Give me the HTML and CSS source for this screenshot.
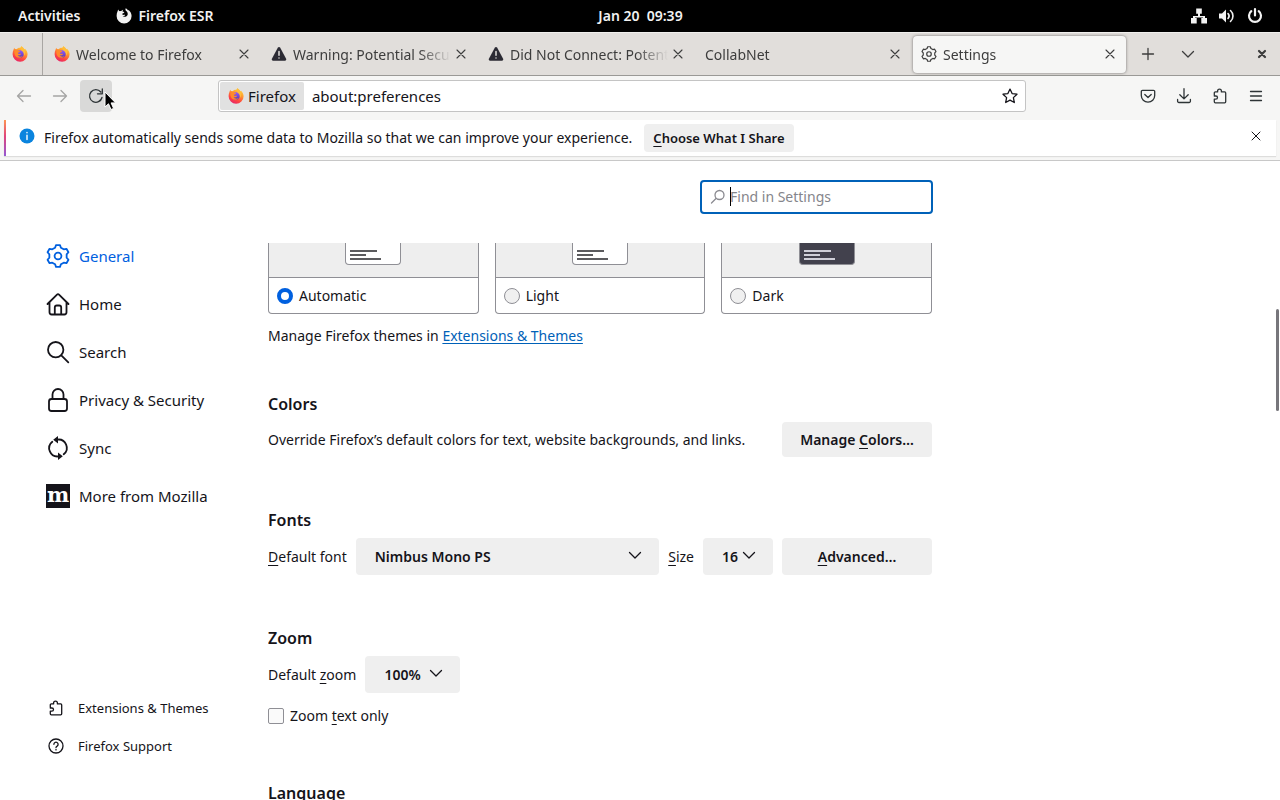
FILE: index.html
```html
<!DOCTYPE html>
<html lang="en">
<head>
    <meta charset="UTF-8">
    <meta name="viewport" content="width=device-width, initial-scale=1.0">
    <title>Settings</title>
    <link rel="stylesheet" href="styles.css">
</head>
<body>
    <svg class="sprite" aria-hidden="true">
        <defs>
            <linearGradient id="flame" x1="0.8" y1="0" x2="0.3" y2="1">
                <stop offset="0" stop-color="#ffe14a"/>
                <stop offset="0.35" stop-color="#ffa02e"/>
                <stop offset="0.7" stop-color="#ff4a3f"/>
                <stop offset="1" stop-color="#e6236a"/>
            </linearGradient>
            <linearGradient id="globe" x1="0" y1="0" x2="0" y2="1">
                <stop offset="0" stop-color="#9059ff"/>
                <stop offset="1" stop-color="#5b3bb0"/>
            </linearGradient>
        </defs>
        <symbol id="i-firefox" viewBox="0 0 16 16">
            <path fill="url(#flame)" d="M1.6 3.4c.1-.7.5-1.3.9-1.6 0 .6.2 1 .5 1.4.6-.2 1.200-.2 1.800 0C5.600 2.300 6.800 1.700 8 1.900 8.500 1.400 9 .8 9.200.2c1.800 1 2.600 1.900 3.200 3 .4-.1.600-.2.700-.4 1.500 1.400 2.500 3.400 2.500 5.500a7.500 7.500 0 0 1-15 0c0-1.800.3-3.400 1-4.900z"/>
            <circle cx="8" cy="8" r="3.700" fill="url(#globe)"/>
            <path fill="#ff8a2b" d="M2.600 4.500c1.200-.7 2.700-.5 3.700.3.600-.1 1.300.1 1.700.4-.1.800-.8 1.100-1.600 1.400-.6.300-.5.900.1 1.200.8.300 1.700-.4 2.600 0-.5 1.500-2.200 1.800-3.400 1.300.7 1.500 3.200 2.200 5 .9-1.100 2.100-4.600 2.500-6.600.7C2.600 9.400 2 6.900 2.600 4.500z"/>
            <path fill="#ffbd3a" d="M9.200.2c1.900 1.100 3.500 3 3.900 5.200.3 1.800-.2 3.300-1 4.300.1-2-.4-3.300-1.500-4.200C9 4.300 8.200 2.300 9.200.2z"/>
        </symbol>
        <symbol id="i-firefox-mono" viewBox="0 0 16 16">
            <path d="M1.500 3.600c.2-1 .6-1.600 1.100-2 0 .8.200 1.200.6 1.600.7-.2 1.200-.2 1.800 0 .5-.8 1.400-1.300 2.200-1.400-.5.600-.8 1.200-.7 1.800l1.800.5c0 .7-.9 1.200-1.700 1.500-.4.300-.4.900.1 1.200.8.400 1.500-.3 2.400.1-.4 1-1.400 1.300-2.500 1.200 1.300 1.400 4.600.9 5.100-1.700.3-2-.9-3.300-2-4-.4-.6-.3-1.400.1-2.200 1 .5 1.900 1.400 2.300 2.400l.5-.7c1.700 1.300 3 3.600 3 6a7.500 7.500 0 0 1-15 0c0-1.500.3-3 .9-4.300z"/>
        </symbol>
        <symbol id="i-gear" viewBox="-12 -12 24 24">
            <path d="M-2-10.900H2L2.900-8.300 5.740-6.660 8.440-7.180 10.440-3.720 8.640-1.640V1.640L10.440 3.720 8.440 7.180 5.740 6.660 2.900 8.300 2 10.900H-2L-2.900 8.300-5.740 6.660-8.440 7.180-10.440 3.720-8.640 1.640V-1.640L-10.440-3.720-8.440-7.180-5.740-6.660-2.900-8.300Z"/>
            <circle r="3.400"/>
        </symbol>
        <symbol id="i-close" viewBox="0 0 16 16"><path d="M4 4l8 8M12 4l-8 8"/></symbol>
        <symbol id="i-warning" viewBox="0 0 16 16">
            <path fill="#2b2a33" d="M6.900 1.500a1.300 1.300 0 0 1 2.200 0l6 11.300a1.300 1.300 0 0 1-1.100 1.900H2a1.300 1.300 0 0 1-1.100-1.900z"/>
            <path stroke="#e1dedb" stroke-width="1.500" stroke-linecap="round" d="M8 5.500v3.800M8 11.900v.2"/>
        </symbol>
        <symbol id="i-chevron" viewBox="0 0 16 16"><path d="M2.500 5.500L8 11l5.500-5.500"/></symbol>
        <symbol id="i-puzzle" viewBox="0 0 16 16">
            <path d="M2.300 7.200V4.900a1 1 0 0 1 1-1h2.300V3a1.900 1.900 0 0 1 3.800 0v.9h3.300a1 1 0 0 1 1 1v8.900a1 1 0 0 1-1 1H3.300a1 1 0 0 1-1-1v-2.600h1.600a1.600 1.600 0 0 0 0-3.200H2.300"/>
        </symbol>
    </svg>

    <header class="topbar">
        <div class="topbar-left">
            <button type="button">Activities</button>
            <button type="button" class="app-menu">
                <svg class="icon fill"><use href="#i-firefox-mono"/></svg>
                Firefox ESR
            </button>
        </div>
        <button type="button" class="clock">Jan 20&nbsp; 09:39</button>
        <div class="topbar-right">
            <svg class="icon fill" viewBox="0 0 16 16"><path d="M5.200.5h5.600v5.200H9V8h5v2h2v5.500h-5.700V10H12v-.5H4v.5h1.700v5.500H0V10h2V8h5V5.700H5.200z"/></svg>
            <svg class="icon" viewBox="0 0 16 16"><path class="solid" d="M0 5.500h3L7 1.500v13l-4-4H0z"/><path class="thick" d="M9 5.500c1.300 1.400 1.300 3.600 0 5M11.500 2.500c3.300 3 3.300 8 0 11"/></svg>
            <svg class="icon" viewBox="0 0 16 16"><path class="bold" d="M8 1v6.500M4.300 3.200a6 6 0 1 0 7.400 0"/></svg>
        </div>
    </header>

    <nav class="tabbar">
        <button type="button" class="pinned" aria-label="Firefox"><svg class="icon"><use href="#i-firefox"/></svg></button>
        <div class="tab">
            <svg class="icon"><use href="#i-firefox"/></svg>
            <span class="tab-title">Welcome to Firefox</span>
            <button type="button" class="tab-close" aria-label="Close tab"><svg class="icon"><use href="#i-close"/></svg></button>
        </div>
        <div class="tab">
            <svg class="icon"><use href="#i-warning"/></svg>
            <span class="tab-title">Warning: Potential Secur</span>
            <button type="button" class="tab-close" aria-label="Close tab"><svg class="icon"><use href="#i-close"/></svg></button>
        </div>
        <div class="tab">
            <svg class="icon"><use href="#i-warning"/></svg>
            <span class="tab-title">Did Not Connect: Potenti</span>
            <button type="button" class="tab-close" aria-label="Close tab"><svg class="icon"><use href="#i-close"/></svg></button>
        </div>
        <div class="tab">
            <span class="tab-title">CollabNet</span>
            <button type="button" class="tab-close" aria-label="Close tab"><svg class="icon"><use href="#i-close"/></svg></button>
        </div>
        <div class="tab active">
            <svg class="icon gear-small"><use href="#i-gear"/></svg>
            <span class="tab-title">Settings</span>
            <button type="button" class="tab-close" aria-label="Close tab"><svg class="icon"><use href="#i-close"/></svg></button>
        </div>
        <button type="button" class="tool" aria-label="New tab"><svg class="icon" viewBox="0 0 16 16"><path d="M8 2.500v11M2.500 8h11"/></svg></button>
        <button type="button" class="tool" aria-label="List all tabs"><svg class="icon"><use href="#i-chevron"/></svg></button>
        <button type="button" class="window-close" aria-label="Close window"><svg class="icon" viewBox="0 0 16 16"><path class="bold" d="M5 5l6 6M11 5l-6 6"/></svg></button>
    </nav>

    <div class="toolbar">
        <button type="button" class="tool" aria-label="Back" disabled><svg class="icon" viewBox="0 0 16 16"><path d="M14.500 8H1.500M7 2.500L1.500 8 7 13.500"/></svg></button>
        <button type="button" class="tool" aria-label="Forward" disabled><svg class="icon" viewBox="0 0 16 16"><path d="M1.500 8h13M9 2.500L14.500 8 9 13.500"/></svg></button>
        <button type="button" class="tool reload" aria-label="Reload">
            <svg class="icon" viewBox="0 0 16 16"><path d="M14 9.500A6.300 6.300 0 1 1 12.800 4M14.300 1v4.800H9.500"/></svg>
            <svg class="pointer" viewBox="0 0 12 20"><path d="M1 1v15l3.500-3.200L7 18.500l2.600-1.100-2.500-5.500h4.500z"/></svg>
        </button>
        <div class="urlbar">
            <span class="identity"><svg class="icon"><use href="#i-firefox"/></svg>Firefox</span>
            <input type="text" value="about:preferences" aria-label="Address">
            <button type="button" class="star" aria-label="Bookmark this page"><svg class="icon" viewBox="0 0 16 16"><path d="M8 1.100l2.100 4.500 4.900.6-3.600 3.400.9 4.900L8 12.100l-4.300 2.400.9-4.900L1 6.200l4.900-.6z"/></svg></button>
        </div>
        <button type="button" class="tool" aria-label="Save to Pocket"><svg class="icon" viewBox="0 0 16 16"><path d="M2.500 2.300h11a1.200 1.200 0 0 1 1.200 1.200v4a6.700 6.700 0 0 1-13.400 0v-4a1.200 1.200 0 0 1 1.200-1.200zM4.800 6.500L8 9.500l3.200-3"/></svg></button>
        <button type="button" class="tool" aria-label="Downloads"><svg class="icon" viewBox="0 0 16 16"><path d="M8 .7v10M3.800 6.700L8 10.900l4.200-4.200M1.600 11.500v1.700a1.300 1.300 0 0 0 1.300 1.300h10.200a1.300 1.300 0 0 0 1.300-1.300v-1.700"/></svg></button>
        <button type="button" class="tool" aria-label="Extensions"><svg class="icon"><use href="#i-puzzle"/></svg></button>
        <button type="button" class="tool" aria-label="Menu"><svg class="icon" viewBox="0 0 16 16"><path d="M2.500 3.500h11M2.500 8h11M2.500 12.500h11"/></svg></button>
    </div>

    <div class="notification">
        <div class="notification-box">
            <svg class="icon" viewBox="0 0 16 16"><circle cx="8" cy="8" r="7.500" fill="#0a84de"/><path class="info-mark" d="M8 7.200v4.300M8 4.500v.3"/></svg>
            <p>Firefox automatically sends some data to Mozilla so that we can improve your experience.</p>
            <button type="button" class="choose"><u>C</u>hoose What I Share</button>
            <button type="button" class="dismiss" aria-label="Dismiss"><svg class="icon"><use href="#i-close"/></svg></button>
        </div>
    </div>

    <div class="page">
        <aside class="sidebar">
            <nav class="categories">
                <a href="#general" class="selected"><svg class="icon"><use href="#i-gear"/></svg>General</a>
                <a href="#home"><svg class="icon" viewBox="0 0 24 24"><path d="M1.500 12L11 2.600a1.400 1.400 0 0 1 2 0L22.500 12M3.500 10.500v9.800A2.200 2.200 0 0 0 5.700 22.500h12.600a2.200 2.200 0 0 0 2.200-2.200v-9.800M8.800 22.500v-7a2 2 0 0 1 2-2h2.400a2 2 0 0 1 2 2v7"/></svg>Home</a>
                <a href="#search"><svg class="icon" viewBox="0 0 24 24"><circle cx="9.700" cy="9.700" r="7.700"/><path d="M15.300 15.300l7 7"/></svg>Search</a>
                <a href="#privacy"><svg class="icon" viewBox="0 0 24 24"><rect x="3" y="11" width="18" height="12" rx="2.500"/><path d="M6.500 11V6.500a5.500 5.500 0 0 1 11 0V11"/></svg>Privacy &amp; Security</a>
                <a href="#sync"><svg class="icon" viewBox="0 0 24 24"><path d="M6.300 5.700A8.300 8.300 0 0 0 12.500 20.400M11.500 3.600A8.300 8.300 0 0 1 17.700 18.300"/><path class="solid" d="M12 0v7.400L7.200 3.700zM12 16.600V24l4.800-3.700z"/></svg>Sync</a>
                <a href="#more"><svg class="icon" viewBox="0 0 24 24"><rect class="logo-box" width="24" height="24"/><text class="logo-letter" x="12" y="18">m</text></svg>More from Mozilla</a>
            </nav>
            <nav class="support">
                <a href="#themes"><svg class="icon"><use href="#i-puzzle"/></svg>Extensions &amp; Themes</a>
                <a href="#support"><svg class="icon" viewBox="0 0 16 16"><circle cx="8" cy="8" r="7"/><path d="M5.900 6.300a2.100 2.100 0 1 1 3.200 1.800c-.7.400-1.100.7-1.100 1.500M8 11.500v.4"/></svg>Firefox Support</a>
            </nav>
        </aside>

        <main class="settings">
            <div class="search-row">
                <div class="search">
                    <svg class="icon" viewBox="0 0 16 16"><circle cx="9.500" cy="6" r="4.500"/><path d="M6 9.500l-4.500 4.500"/></svg>
                    <input type="text" placeholder="Find in Settings" aria-label="Find in Settings">
                    <span class="caret"></span>
                </div>
            </div>

            <div class="scroll">
                <section class="appearance">
                    <div class="themes">
                        <label class="theme">
                            <span class="preview"><span class="window"><i></i><i></i><i></i></span></span>
                            <span class="theme-name"><input type="radio" name="theme" checked>Automatic</span>
                        </label>
                        <label class="theme">
                            <span class="preview"><span class="window"><i></i><i></i><i></i></span></span>
                            <span class="theme-name"><input type="radio" name="theme">Light</span>
                        </label>
                        <label class="theme">
                            <span class="preview"><span class="window dark"><i></i><i></i><i></i></span></span>
                            <span class="theme-name"><input type="radio" name="theme">Dark</span>
                        </label>
                    </div>
                    <p>Manage Firefox themes in <a href="#themes">Extensions &amp; Themes</a></p>
                </section>

                <section>
                    <h2>Colors</h2>
                    <div class="row">
                        <p class="grow">Override Firefox’s default colors for text, website backgrounds, and links.</p>
                        <button type="button" class="btn">Manage <u>C</u>olors…</button>
                    </div>
                </section>

                <section>
                    <h2>Fonts</h2>
                    <div class="row">
                        <label for="font"><u>D</u>efault font</label>
                        <span class="select grow">
                            <select id="font"><option>Nimbus Mono PS</option></select>
                            <svg class="icon"><use href="#i-chevron"/></svg>
                        </span>
                        <label for="size"><u>S</u>ize</label>
                        <span class="select size">
                            <select id="size"><option>16</option></select>
                            <svg class="icon"><use href="#i-chevron"/></svg>
                        </span>
                        <button type="button" class="btn"><u>A</u>dvanced…</button>
                    </div>
                </section>

                <section>
                    <h2>Zoom</h2>
                    <div class="row">
                        <label for="zoom">Default <u>z</u>oom</label>
                        <span class="select zoom">
                            <select id="zoom"><option>100%</option></select>
                            <svg class="icon"><use href="#i-chevron"/></svg>
                        </span>
                    </div>
                    <label class="check"><input type="checkbox">Zoom <u>t</u>ext only</label>
                </section>

                <section>
                    <h2>Language</h2>
                </section>
            </div>
        </main>
        <div class="scrollbar"></div>
    </div>
</body>
</html>
```
FILE: styles.css
```css
:root {
    --text: #15141a;
    --blue: #0060df;
    --link: #0061b8;
    --button-bg: #efefef;
    --border: #8f8f95;
}

* {
    margin: 0;
    padding: 0;
    box-sizing: border-box;
}

body {
    height: 100vh;
    display: flex;
    flex-direction: column;
    overflow: hidden;
    background: #fff;
    color: var(--text);
    font-family: "Noto Sans", "Open Sans", sans-serif;
    font-size: 14px;
    line-height: 24px;
}

button, input, select {
    font: inherit;
    color: inherit;
    border: none;
    background: none;
}

u {
    text-underline-offset: 3px;
}

.sprite {
    position: absolute;
    width: 0;
    height: 0;
}

.icon {
    display: block;
    flex: none;
    width: 16px;
    height: 16px;
    fill: none;
    stroke: currentColor;
    stroke-width: 1.3;
    stroke-linecap: round;
    stroke-linejoin: round;
    overflow: visible;
}

.icon.fill,
.icon .solid {
    fill: currentColor;
    stroke: none;
}

.icon .thick {
    stroke-width: 1.6;
}

.icon .bold {
    stroke-width: 2.2;
}

#i-firefox,
#i-warning path:first-child {
    stroke: none;
}

/* desktop bar */
.topbar {
    flex: none;
    display: grid;
    grid-template-columns: 1fr auto 1fr;
    align-items: center;
    height: 32px;
    padding: 0 17px 0 18px;
    background: #000;
    color: #f2f2f2;
    font-weight: 600;
}

.topbar-left, .topbar-right {
    display: flex;
    align-items: center;
    gap: 36px;
}

.topbar-right {
    justify-content: flex-end;
    gap: 12px;
}

.app-menu {
    display: flex;
    align-items: center;
    gap: 6px;
}

/* tabs */
.tabbar {
    flex: none;
    display: flex;
    align-items: center;
    height: 44px;
    padding-right: 10px;
    background: #e1dedb;
    border-bottom: 1px solid #9a9996;
    border-top: 1px solid #f0efed;
    color: #3d3d3d;
}

.pinned {
    align-self: stretch;
    width: 43px;
    padding-left: 12px;
    border-right: 1px solid #a9a6a3;
}

.tab {
    flex: 0 1 217px;
    min-width: 0;
    display: flex;
    align-items: center;
    gap: 6px;
    height: 37px;
    padding: 0 8px 0 11px;
}

.tab-title {
    flex: 1;
    overflow: hidden;
    white-space: nowrap;
    padding-top: 1px;
    mask-image: linear-gradient(to left, transparent, #000 32px);
}

.tab.active {
    margin: 0 2px;
    flex-basis: 213px;
    padding: 0 8px;
    background: #f6f6f5;
    border-radius: 4px;
    box-shadow: 0 0 3px rgba(0, 0, 0, 0.5);
}

.tab-close {
    padding: 0;
    margin-left: -4px;
}

.tab-close .icon {
    stroke-width: 1.1;
}

.gear-small {
    stroke-width: 1.8;
}

.tool {
    display: flex;
    align-items: center;
    justify-content: center;
    width: 32px;
    height: 32px;
    border-radius: 4px;
}

.tabbar .tool {
    margin: 0 4px;
}

.window-close {
    margin-left: auto;
}

/* navigation */
.toolbar {
    flex: none;
    display: flex;
    align-items: center;
    gap: 4px;
    height: 44px;
    padding: 4px 8px 8px;
    background: #f6f6f5;
    color: #2e3436;
}

.tool:disabled {
    color: #a5a5a4;
}

.reload {
    position: relative;
    background: #d9d9d8;
}

.pointer {
    position: absolute;
    left: 24px;
    top: 11px;
    width: 12px;
    height: 20px;
    fill: #000;
    stroke: #fff;
    overflow: visible;
}

.urlbar {
    flex: 1;
    display: flex;
    align-items: center;
    height: 32px;
    margin: 0 102px;
    padding: 1px;
    background: #fff;
    border: 1px solid #c4c4c4;
    border-radius: 3px;
    font-size: 15px;
    color: var(--text);
}

.identity {
    display: flex;
    align-items: center;
    gap: 4px;
    height: 28px;
    padding: 0 8px;
    background: #e1e1e1;
    border-radius: 2px;
}

.urlbar input {
    flex: 1;
    min-width: 0;
    padding: 0 8px;
    outline: none;
}

.star {
    padding: 0 6px;
}

/* notification */
.notification {
    flex: none;
    padding: 0 4px 4px;
    background: #f6f6f5;
    border-bottom: 1px solid #c8c8c8;
}

.notification-box {
    display: flex;
    align-items: center;
    height: 36px;
    padding-right: 12px;
    background: #fff;
    border-left: 2px solid;
    border-image: linear-gradient(#ff9a50, #e0457b 45%, #9059d8) 1;
    box-shadow: 0 1px 1px rgba(0, 0, 0, 0.1);
}

.notification-box > .icon {
    margin: 0 9px 4px 13px;
    stroke: none;
}

.icon .info-mark {
    stroke: #fff;
    stroke-width: 1.4;
}

.choose {
    height: 28px;
    margin-left: 12px;
    padding: 0 9px;
    background: var(--button-bg);
    border-radius: 4px;
    font-size: 13px;
    font-weight: 600;
}

.dismiss {
    margin: 0 0 4px auto;
}

.dismiss .icon {
    stroke-width: 1;
}

/* settings page */
.page {
    position: relative;
    flex: 1;
    min-height: 0;
    display: flex;
}

.sidebar {
    flex: 0 0 268px;
    display: flex;
    flex-direction: column;
    justify-content: space-between;
    padding: 71px 0 35px 46px;
}

.sidebar a {
    display: flex;
    align-items: center;
    color: var(--text);
    text-decoration: none;
}

.categories a {
    gap: 9px;
    height: 48px;
    font-size: 15px;
}

.categories .icon {
    width: 24px;
    height: 24px;
    stroke-width: 1.8;
}

.sidebar .selected {
    color: var(--blue);
}

.logo-box {
    fill: #15141a;
    stroke: none;
}

.logo-letter {
    fill: #fff;
    stroke: none;
    font-family: "DejaVu Serif", serif;
    font-size: 21px;
    font-weight: bold;
    text-anchor: middle;
}

.support a {
    gap: 14px;
    height: 38px;
    padding-left: 2px;
    font-size: 13px;
}

.settings {
    flex: 0 1 665px;
    display: flex;
    flex-direction: column;
    min-width: 0;
}

.search-row {
    flex: none;
    display: flex;
    justify-content: flex-end;
    padding: 19px 0 29px;
}

.search {
    position: relative;
    display: flex;
    align-items: center;
    gap: 4px;
    width: 233px;
    height: 34px;
    padding: 0 8px;
    border: 2px solid var(--link);
    border-radius: 4px;
    color: #8a8a90;
}

.search input {
    flex: 1;
    min-width: 0;
    outline: none;
}

.search input::placeholder {
    color: #85858b;
}

.caret {
    position: absolute;
    left: 28px;
    top: 5px;
    width: 1px;
    height: 19px;
    background: #000;
}

.scroll {
    flex: 1;
    min-height: 0;
    overflow: hidden;
    padding-right: 1px;
}

section {
    margin-bottom: 51px;
}

.appearance {
    margin-bottom: 44px;
}

.themes {
    display: flex;
    gap: 16px;
    margin-bottom: 10px;
}

.theme {
    flex: 1;
    border: 1px solid var(--border);
    border-top: none;
    border-radius: 0 0 4px 4px;
}

.preview {
    display: flex;
    justify-content: center;
    height: 35px;
    background: #eee;
    border-bottom: 1px solid var(--border);
}

.window {
    display: flex;
    flex-direction: column;
    gap: 2px;
    width: 56px;
    height: 22px;
    padding: 7px 4px 0;
    background: #fff;
    border: 1px solid var(--border);
    border-top: none;
    border-radius: 0 0 4px 4px;
}

.window i {
    width: 27px;
    height: 2px;
    background: #5b5b5e;
}

.window i:nth-child(2) {
    width: 16px;
}

.window i:nth-child(3) {
    width: 31px;
}

.window.dark {
    background: #42414d;
}

.window.dark i {
    background: #cfcfd8;
}

.theme-name {
    display: flex;
    align-items: center;
    gap: 6px;
    height: 35px;
    padding-left: 8px;
}

input[type="radio"] {
    appearance: none;
    width: 16px;
    height: 16px;
    border: 1px solid var(--border);
    border-radius: 50%;
    background: #f0f0f0;
}

input[type="radio"]:checked {
    border: 4px solid var(--blue);
    background: #fff;
}

.appearance a {
    color: var(--link);
    text-underline-offset: 2px;
}

h2 {
    margin-bottom: 6px;
    font-size: 16px;
    font-weight: 600;
    line-height: 24px;
}

.row {
    display: flex;
    align-items: center;
    gap: 9px;
}

.grow {
    flex: 1;
}

.btn {
    width: 150px;
    height: 35px;
    background: var(--button-bg);
    border-radius: 4px;
    font-weight: 600;
}

.select {
    position: relative;
}

.select select {
    appearance: none;
    display: block;
    width: 100%;
    height: 37px;
    padding: 0 19px;
    background: var(--button-bg);
    border-radius: 4px;
    font-weight: 600;
}

.select .icon {
    position: absolute;
    right: 16px;
    top: 9px;
    pointer-events: none;
}

.select.size {
    width: 70px;
}

.select.size select {
    padding-right: 0;
}

.select.zoom {
    width: 95px;
}

.select.zoom select {
    padding-right: 0;
}

.select ~ .btn {
    height: 37px;
}

.check {
    display: flex;
    align-items: center;
    width: fit-content;
    margin-top: 11px;
    padding-bottom: 2px;
    white-space: pre;
}

.check input {
    appearance: none;
    width: 16px;
    height: 16px;
    margin-right: 6px;
    background: #fafafa;
    border: 1px solid var(--border);
    border-radius: 2px;
}

.scrollbar {
    position: absolute;
    right: 1px;
    top: 148px;
    width: 3px;
    height: 102px;
    background: #77767b;
    border-radius: 2px;
}
```
